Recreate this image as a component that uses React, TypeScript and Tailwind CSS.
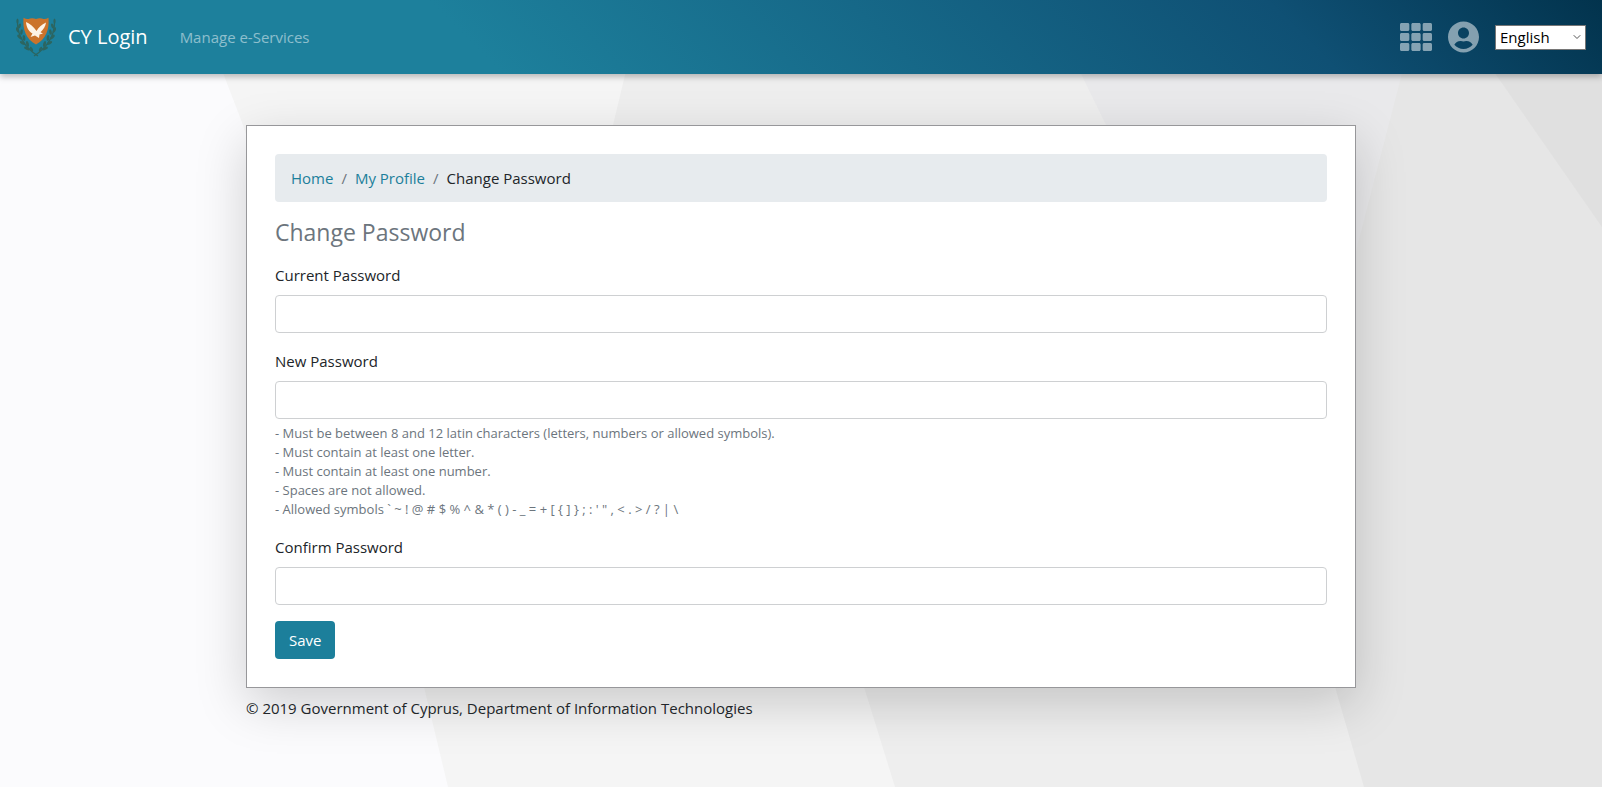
import { useState } from "react";
import type { FormEvent } from "react";
import { ChevronDown } from "lucide-react";
import { FaTh, FaUserCircle } from "react-icons/fa";

const password_rules = [
  "- Must be between 8 and 12 latin characters (letters, numbers or allowed symbols).",
  "- Must contain at least one letter.",
  "- Must contain at least one number.",
  "- Spaces are not allowed.",
  "- Allowed symbols ` ~ ! @ # $ % ^ & * ( ) - _ = + [ { ] } ; : ' \" , < . > / ? | \\",
];

export default function App() {
  return (
    <div className="relative isolate flex min-h-screen flex-col overflow-hidden bg-[#fbfbfd] font-['Open_Sans',sans-serif] text-[15px] leading-6 text-[#212529]">
      <Backdrop />
      <Navbar />
      <div className="mx-auto mt-[51px] w-full max-w-[1140px] px-[15px]">
        <main className="border border-[#97979a] bg-white p-7 shadow-[0_16px_48px_rgba(0,0,0,0.175)]">
          <Breadcrumb />
          <h1 className="mt-4 mb-4 text-[23px] leading-[29px] text-[#6c757d]">Change Password</h1>
          <Password_Form />
        </main>
        <footer className="relative mt-2">© 2019 Government of Cyprus, Department of Information Technologies</footer>
      </div>
    </div>
  );
}

function Navbar() {
  const [language, set_language] = useState("en");

  return (
    <header className="flex h-[74px] items-center bg-[linear-gradient(45deg,#1d809c_30%,#0f5074_80%,#02334d_100%)] px-4 shadow-[0_3px_6px_rgba(0,0,0,0.25)]">
      <a
        href="#home"
        className="flex items-center gap-3 text-[20px] text-white"
      >
        <Crest />
        CY Login
      </a>
      <nav className="ml-8 flex-1">
        <a
          href="#services"
          className="text-white/50"
        >
          Manage e-Services
        </a>
      </nav>
      <div className="flex items-center gap-4 text-white/50">
        <button
          type="button"
          aria-label="Services"
        >
          <FaTh className="size-8" />
        </button>
        <button
          type="button"
          aria-label="Account"
        >
          <FaUserCircle className="h-8 w-[31px]" />
        </button>
        <div className="relative">
          <select
            aria-label="Language"
            value={language}
            onChange={(e) => set_language(e.target.value)}
            className="block h-[25px] w-[91px] appearance-none border border-[#767676] bg-white pl-1 leading-[23px] text-black"
          >
            <option value="en">English</option>
            <option value="el">Ελληνικά</option>
          </select>
          <ChevronDown
            className="pointer-events-none absolute top-[6px] right-[3px] size-3 text-[#555]"
            strokeWidth={2}
          />
        </div>
      </div>
    </header>
  );
}

function Breadcrumb() {
  return (
    <nav aria-label="Breadcrumb">
      <ol className="flex gap-2 rounded bg-[#e7ebee] px-4 py-3">
        <li>
          <a
            href="#home"
            className="text-[#1c7f9b]"
          >
            Home
          </a>
        </li>
        <li className="text-[#6c757d]">/</li>
        <li>
          <a
            href="#profile"
            className="text-[#1c7f9b]"
          >
            My Profile
          </a>
        </li>
        <li className="text-[#6c757d]">/</li>
        <li>Change Password</li>
      </ol>
    </nav>
  );
}

function Password_Form() {
  const handle_submit = (e: FormEvent) => e.preventDefault();

  return (
    <form
      onSubmit={handle_submit}
      className="space-y-4"
    >
      <Password_Field
        id="current-password"
        label="Current Password"
      />
      <Password_Field
        id="new-password"
        label="New Password"
        hints={password_rules}
      />
      <Password_Field
        id="confirm-password"
        label="Confirm Password"
      />
      <button
        type="submit"
        className="block h-[38px] rounded bg-[#1c7f9b] px-3.5 text-white"
      >
        Save
      </button>
    </form>
  );
}

function Password_Field({ id, label, hints }: { id: string; label: string; hints?: string[] }) {
  return (
    <div>
      <label
        htmlFor={id}
        className="mb-2 block"
      >
        {label}
      </label>
      <input
        id={id}
        type="password"
        className="block h-[38px] w-full rounded border border-[#ced0d2] bg-white px-3 outline-none focus:border-[#1c7f9b]"
      />
      {hints && (
        <ul className="mt-[5px] text-[13px] leading-[19px] text-[#6c757d]">
          {hints.map((hint) => (
            <li key={hint}>{hint}</li>
          ))}
        </ul>
      )}
    </div>
  );
}

// Faceted page background
function Backdrop() {
  return (
    <svg
      className="absolute inset-0 -z-10 size-full"
      viewBox="0 0 1602 787"
      preserveAspectRatio="none"
      aria-hidden="true"
    >
      <path d="M195 0L243 125L424 687L448 787H1602V0Z" fill="#f5f5f5" />
      <path d="M643 0L613 125L864 687L895 787H1602V0Z" fill="#eeeeee" />
      <path d="M1045 0L1106 125L1335 687H1602V0Z" fill="#e9e9eb" />
      <path d="M1421 0L1357 247L1300 560L1335 687L1364 787H1602V0Z" fill="#e6e6e6" />
      <path d="M1444 0L1602 227V0Z" fill="#e0e0e0" />
    </svg>
  );
}

// Shield with a dove between two olive branches
function Crest() {
  return (
    <svg
      viewBox="0 0 40 40"
      className="size-10"
      aria-hidden="true"
    >
      <g fill="none" stroke="#2c6560" strokeWidth="1.3">
        <path d="M1.500 3C1 14 4 27 22 39" />
        <path d="M38.500 3C39 14 36 27 18 39" />
      </g>
      <g fill="#2c6560">
        {[0, 1].map((side) => (
          <g
            key={side}
            transform={side ? "translate(40 0) scale(-1 1)" : undefined}
          >
            <ellipse cx="1.500" cy="4" rx="1" ry="2.500" />
            <ellipse cx="3.500" cy="9" rx="1.300" ry="2.600" transform="rotate(20 3.500 9)" />
            <ellipse cx="1.500" cy="13" rx="1.300" ry="2.800" transform="rotate(-25 1.500 13)" />
            <ellipse cx="5.500" cy="15" rx="1.300" ry="2.800" transform="rotate(10 5.500 15)" />
            <ellipse cx="3.500" cy="20" rx="1.300" ry="3" transform="rotate(-45 3.500 20)" />
            <ellipse cx="8" cy="21" rx="1.400" ry="3" transform="rotate(-5 8 21)" />
            <ellipse cx="6.500" cy="26" rx="1.400" ry="3" transform="rotate(-60 6.500 26)" />
            <ellipse cx="11.500" cy="27" rx="1.400" ry="3" transform="rotate(-15 11.500 27)" />
            <ellipse cx="11" cy="31.500" rx="1.400" ry="3.200" transform="rotate(-65 11 31.500)" />
            <ellipse cx="15.500" cy="32" rx="1.200" ry="2.500" transform="rotate(-30 15.500 32)" />
          </g>
        ))}
      </g>
      <path
        d="M7.500 .8Q11 3 14 1.500Q17 .8 20 2Q23 .8 26 1.500Q29 3 32.500 .8C33.500 13 30 22 20 27.500C10 22 6.500 13 7.500 .8Z"
        fill="#cb732b"
      />
      <path
        d="M10 5C10.500 11 13 14.500 16.500 16.500L14.500 20L19 18.500L23 21L23.500 17.500L27 16.500L24.500 15.200C27.500 12.500 29.500 9.500 30 5.500C25.500 7.500 22.500 10.500 20.500 14C17.500 9.500 14 6.500 10 5Z"
        fill="#fdf3e6"
      />
    </svg>
  );
}
